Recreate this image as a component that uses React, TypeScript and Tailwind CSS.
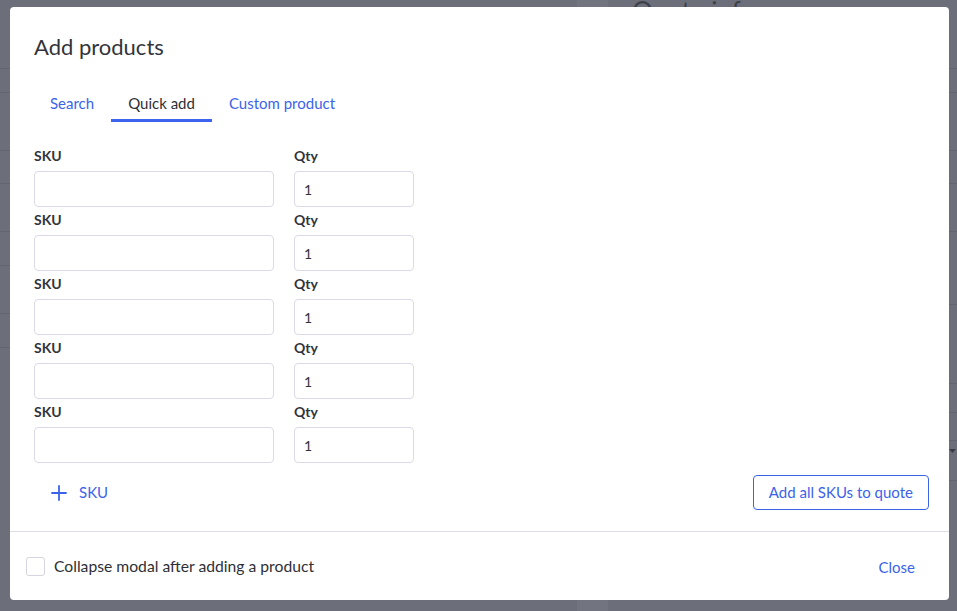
import { Plus } from "lucide-react";

const ROWS = [0, 1, 2, 3, 4];

const TABS = [
  { label: "Search", active: false },
  { label: "Quick add", active: true },
  { label: "Custom product", active: false },
];

function Backdrop() {
  return (
    <div className="flex h-full w-full">
      {/* left page area */}
      <div className="flex w-[577px] flex-col">
        <div className="h-[69px] border-b border-[#62656f]" />
        <div className="h-[24px] border-b border-[#62656f]" />
        <div className="h-[58px] border-b border-[#62656f]" />
        <div className="h-[33px] border-b border-[#62656f]" />
        <div className="h-[48px] border-b border-[#62656f]" />
        <div className="h-[34px] border-b border-[#62656f]" />
        <div className="h-[48px] border-b border-[#62656f]" />
        <div className="h-[34px] border-b border-[#62656f]" />
      </div>
      <div className="h-full w-[31px] bg-[#72757f]" />
      {/* right side panel */}
      <div className="flex flex-1 flex-col">
        <div className="h-[69px] border-b border-[#62656f] pl-[24px]">
          <div className="-mt-[4px] text-[26px] leading-[30px] text-[#3f414a]">Quote info</div>
        </div>
        <div className="h-[24px] border-b border-[#62656f]" />
        <div className="h-[58px] border-b border-[#62656f]" />
        <div className="h-[33px] border-b border-[#62656f]" />
        <div className="h-[48px] border-b border-[#62656f]" />
        <div className="h-[73px] border-b border-[#62656f]" />
        <div className="h-[79px] border-b border-[#62656f]" />
        <div className="h-[29px] border-b border-[#62656f]" />
        <div className="flex h-[28px] items-end justify-end border-b border-[#62656f] pr-[1px]">
          <svg width="7" height="4" viewBox="0 0 7 4" className="mb-[-13px]">
            <path d="M0 0h7L3.5 4z" fill="#3a3c44" />
          </svg>
        </div>
        <div className="h-[40px] border-b border-[#62656f]" />
      </div>
    </div>
  );
}

function ProductRow() {
  return (
    <div className="mb-[3px] flex gap-[20px]">
      <div className="flex w-[240px] flex-col">
        <label className="mb-[5px] text-[14px] font-bold leading-[20px] text-[#33343b]">SKU</label>
        <input
          type="text"
          className="h-[36px] w-full rounded-[4px] border border-[#dcd9e8] bg-white px-[9px] text-[14px] text-[#33343b] outline-none"
        />
      </div>
      <div className="flex w-[120px] flex-col">
        <label className="mb-[5px] text-[14px] font-bold leading-[20px] text-[#33343b]">Qty</label>
        <input
          type="text"
          defaultValue="1"
          className="h-[36px] w-full rounded-[4px] border border-[#dcd9e8] bg-white px-[9px] text-[14px] text-[#33343b] outline-none"
        />
      </div>
    </div>
  );
}

export default function App() {
  return (
    <div className="relative h-[611px] w-[957px] overflow-hidden bg-[#6c6f7a] font-['Lato',sans-serif]">
      <Backdrop />

      {/* Modal */}
      <div className="absolute left-[10px] top-[7px] flex h-[593px] w-[939px] flex-col rounded-[4px] bg-white">
        <div className="px-[24px] pt-[26px]">
          <h1 className="text-[22px] leading-[28px] text-[#33343b]">Add products</h1>
        </div>

        {/* Tabs */}
        <div className="mt-[30px] flex px-[23px]">
          {TABS.map((t) => (
            <button
              key={t.label}
              className={`border-b-[3px] px-[17px] pb-[6px] pt-[2px] text-[15px] leading-[20px] ${
                t.active ? "border-[#3d63ef] text-[#2e2f36]" : "border-transparent text-[#3b63ea]"
              }`}
            >
              {t.label}
            </button>
          ))}
        </div>

        {/* Quick add form */}
        <div className="px-[24px] pt-[24px]">
          {ROWS.map((r) => (
            <ProductRow key={r} />
          ))}
        </div>

        <div className="mt-[9px] flex items-center justify-between pl-[37px] pr-[20px]">
          <button className="flex items-center gap-[8px] text-[15px] text-[#3b63ea]">
            <Plus size={24} strokeWidth={1.8} />
            <span>SKU</span>
          </button>
          <button className="h-[35px] rounded-[4px] border border-[#3b63ea] px-[15px] text-[15px] text-[#3b63ea]">
            Add all SKUs to quote
          </button>
        </div>

        <div className="mt-[21px] flex flex-1 items-center justify-between border-t border-[#e0dde9] pl-[16px] pr-[34px] pt-[2px]">
          <label className="flex items-center gap-[9px] text-[15.7px] text-[#2e2f36]">
            <span className="-mt-[1px] h-[19px] w-[19px] rounded-[3px] border border-[#d6d4de] bg-white" />
            Collapse modal after adding a product
          </label>
          <button className="text-[15px] text-[#3b63ea]">Close</button>
        </div>
      </div>
    </div>
  );
}
